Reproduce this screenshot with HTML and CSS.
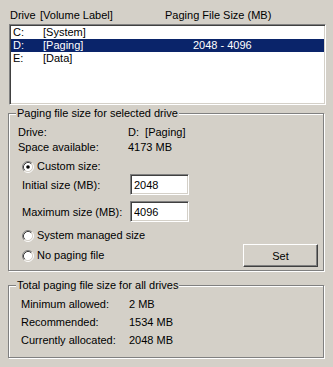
FILE: index.html
```html
<!DOCTYPE html>
<html lang="en">
<head>
    <meta charset="UTF-8">
    <title>Virtual Memory</title>
    <link rel="stylesheet" href="styles.css">
</head>
<body>
    <div class="dialog">
        <div class="list-head">
            <span>Drive</span>
            <span>[Volume Label]</span>
            <span>Paging File Size (MB)</span>
        </div>
        <div class="listbox">
            <div class="row"><span>C:</span><span>[System]</span><span></span></div>
            <div class="row selected"><span>D:</span><span>[Paging]</span><span>2048 - 4096</span></div>
            <div class="row"><span>E:</span><span>[Data]</span><span></span></div>
        </div>

        <div class="group group-drive">
            <div class="group-title">Paging file size for selected drive</div>
            <div class="info">
                <span>Drive:</span><span>D:&nbsp; [Paging]</span>
                <span>Space available:</span><span>4173 MB</span>
            </div>
            <label class="radio radio-custom">
                <svg width="12" height="12" viewBox="0 0 12 12">
                    <circle cx="6" cy="6" r="4.5" fill="#fff"/>
                    <path d="M2.11 9.89 A5.5 5.5 0 0 1 9.89 2.11" fill="none" stroke="#808080"/>
                    <path d="M9.89 2.11 A5.5 5.5 0 0 1 2.11 9.89" fill="none" stroke="#fff"/>
                    <path d="M2.82 9.18 A4.5 4.5 0 0 1 9.18 2.82" fill="none" stroke="#404040"/>
                    <path d="M9.18 2.82 A4.5 4.5 0 0 1 2.82 9.18" fill="none" stroke="#d4d0c8"/>
                    <circle cx="6" cy="6" r="1.8" fill="#000"/>
                </svg>
                <span>Custom size:</span>
            </label>
            <div class="field field-initial">
                <span>Initial size (MB):</span>
                <input class="size-input" type="text" value="2048">
            </div>
            <div class="field field-max">
                <span>Maximum size (MB):</span>
                <input class="size-input" type="text" value="4096">
            </div>
            <label class="radio radio-system">
                <svg width="12" height="12" viewBox="0 0 12 12">
                    <circle cx="6" cy="6" r="4.5" fill="#fff"/>
                    <path d="M2.11 9.89 A5.5 5.5 0 0 1 9.89 2.11" fill="none" stroke="#808080"/>
                    <path d="M9.89 2.11 A5.5 5.5 0 0 1 2.11 9.89" fill="none" stroke="#fff"/>
                    <path d="M2.82 9.18 A4.5 4.5 0 0 1 9.18 2.82" fill="none" stroke="#404040"/>
                    <path d="M9.18 2.82 A4.5 4.5 0 0 1 2.82 9.18" fill="none" stroke="#d4d0c8"/>
                </svg>
                <span>System managed size</span>
            </label>
            <div class="last-row">
                <label class="radio">
                    <svg width="12" height="12" viewBox="0 0 12 12">
                        <circle cx="6" cy="6" r="4.5" fill="#fff"/>
                        <path d="M2.11 9.89 A5.5 5.5 0 0 1 9.89 2.11" fill="none" stroke="#808080"/>
                        <path d="M9.89 2.11 A5.5 5.5 0 0 1 2.11 9.89" fill="none" stroke="#fff"/>
                        <path d="M2.82 9.18 A4.5 4.5 0 0 1 9.18 2.82" fill="none" stroke="#404040"/>
                        <path d="M9.18 2.82 A4.5 4.5 0 0 1 2.82 9.18" fill="none" stroke="#d4d0c8"/>
                    </svg>
                    <span>No paging file</span>
                </label>
                <button class="button">Set</button>
            </div>
        </div>

        <div class="group group-total">
            <div class="group-title">Total paging file size for all drives</div>
            <div class="totals">
                <span>Minimum allowed:</span><span>2 MB</span>
                <span>Recommended:</span><span>1534 MB</span>
                <span>Currently allocated:</span><span>2048 MB</span>
            </div>
        </div>
    </div>
</body>
</html>
```

FILE: styles.css
```css
body { margin: 0; background: #d4d0c8; font-family: "Liberation Sans", Arial, sans-serif; font-size: 11px; color: #000; }
.dialog { width: 333px; height: 367px; }

.list-head { display: grid; grid-template-columns: 30px 125px auto; height: 24px; padding: 9px 0 0 10px; box-sizing: border-box; line-height: 13px; }

.listbox { margin-left: 9px; width: 317px; height: 81px; box-sizing: border-box; background: #fff; border: 1px solid; border-color: #808080 #fff #fff #808080; box-shadow: inset 1px 1px #404040, inset -1px -1px #d4d0c8; padding: 1px 1px 0 1px; }
.row { display: grid; grid-template-columns: 30px 150px auto; height: 13px; line-height: 13px; padding-left: 2px; }
.row.selected { background: #0a246a; color: #fff; }

.group { position: relative; margin-left: 8px; width: 316px; box-sizing: border-box; border: 1px solid #808080; box-shadow: inset 1px 1px #fff, 1px 1px #fff; }
.group-title { position: absolute; top: -7px; left: 7px; padding: 0 1px; line-height: 13px; background: #d4d0c8; }

.group-drive { margin-top: 8px; height: 158px; padding: 12px 5px 0 9px; }
.info { display: grid; grid-template-columns: 110px auto; row-gap: 2px; line-height: 13px; }

.radio { display: flex; align-items: center; gap: 3px; height: 13px; line-height: 13px; padding-left: 4px; }
.radio svg { flex: none; }
.radio-custom { margin-top: 6px; }
.radio-system { margin-top: 7px; }

.field { display: flex; align-items: center; height: 21px; padding-left: 4px; }
.field span { width: 108px; }
.field-initial { margin-top: 1px; }
.field-max { margin-top: 6px; }
.size-input { width: 59px; height: 21px; box-sizing: border-box; margin: 0; padding: 0 0 0 3px; font: 11px "Liberation Sans", Arial, sans-serif; color: #000; background: #fff; border: 1px solid; border-color: #808080 #fff #fff #808080; box-shadow: inset 1px 1px #404040, inset -1px -1px #d4d0c8; outline: none; }

.last-row { display: flex; align-items: center; justify-content: space-between; margin-top: 2px; height: 23px; }
.button { width: 75px; height: 23px; margin: 0; padding: 0; font: 11px "Liberation Sans", Arial, sans-serif; color: #000; background: #d4d0c8; border: 1px solid; border-color: #fff #404040 #404040 #fff; box-shadow: inset -1px -1px #808080, inset 1px 1px #d4d0c8; }

.group-total { margin-top: 14px; height: 73px; padding: 12px 0 0 12px; }
.totals { display: grid; grid-template-columns: 108px auto; row-gap: 5px; line-height: 13px; }
```
